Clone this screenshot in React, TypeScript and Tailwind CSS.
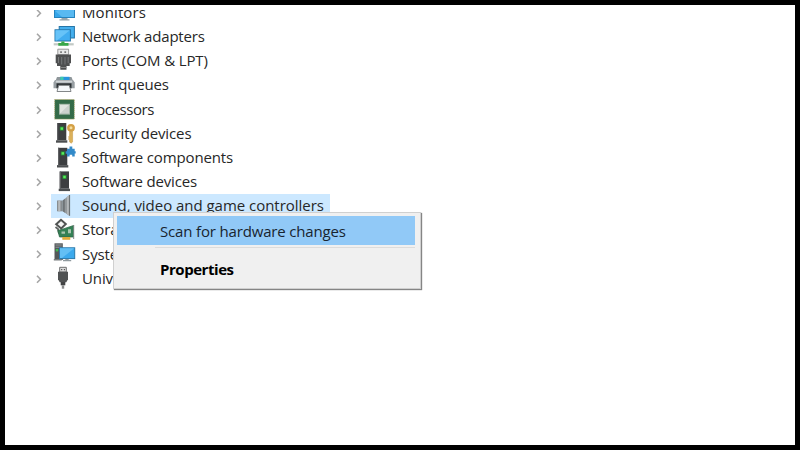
import React from 'react';

function Tower({ x, y = 0 }: { x: number; y?: number }) {
  return (
    <g transform={`translate(${x} ${y})`}>
      <path d="M1.2 0h9.3v17.3H1.2z" fill="#3c3e40" />
      <path d="M1.2 0h1.2v17.3H1.2z" fill="#606264" />
      <path d="M0.2 17.3h11.3v2.4H0.2z" fill="#4c4f51" />
      <rect x="4" y="3.6" width="4" height="4" fill="#258c35" />
      <rect x="4.8" y="4.4" width="2.4" height="2.4" fill="#5bea5b" />
    </g>
  );
}

function MonitorIcon() {
  return (
    <>
      <rect x="1.5" y="2" width="20" height="13.5" fill="#35a5e9" stroke="#2683bd" />
      <path d="M2 9l19-5v11H9z" fill="#58b9f1" />
      <path d="M8.5 16h6v1.3h2v1.3h-10v-1.3h2z" fill="#97a4aa" />
    </>
  );
}

function NetworkIcon() {
  return (
    <>
      <rect x="6.2" y="0.5" width="15.2" height="11.5" fill="#45afed" stroke="#2676a8" />
      <rect x="2" y="3.8" width="15.4" height="11.2" fill="#42adf0" stroke="#2676a8" />
      <path d="M2.5 4.3h14.4L4 14.5H2.5z" fill="#67c3f8" />
      <path d="M0.7 17.2h20v2.2h-20z" fill="#c2c9c5" />
      <path d="M8.3 15.5h3.2v1.5h4v2.8H5.3V17h3z" fill="#38a748" />
    </>
  );
}

function PortIcon() {
  return (
    <>
      <path d="M4.8 -0.8h10.8v5.5h-10.8z" fill="#e8e8e8" stroke="#919191" strokeWidth="0.9" />
      <path d="M7.2 1.3h1.7v1.6H7.2zM11.4 1.3h1.7v1.6h-1.7z" fill="#777" />
      <path d="M2.7 4.5h15.3v8.7h-1.3v2.8h-3.2v3.7H7.3V16H4v-2.8H2.7z" fill="#4e4f50" />
      <path d="M5.5 7v6M8.7 7v7.5M12 7v7.5M15.2 7v6" stroke="#77797a" strokeWidth="1" />
      <path d="M7.3 17.5h6.2" stroke="#858585" />
    </>
  );
}

function PrinterIcon() {
  return (
    <>
      <path d="M4 3h14.5l1.5 4H2.5z" fill="#8f979b" />
      <path d="M7.3 2.8H16.5V6.5H7.3z" fill="#2795de" />
      <path d="M7.3 2.8h3.2V6.5H7.3z" fill="#42c9ac" />
      <path d="M2 6h18l1.7 2.5v5.7H0.5V8.5z" fill="#989fa3" />
      <path d="M2.8 6.6h16.4v2H2.8z" fill="#cfd4d6" />
      <path d="M3.5 9.3h15v5h-15z" fill="#2b3033" />
      <path d="M5.7 11.3h10.6l1.7 6.2H4z" fill="#f5f8fa" stroke="#75797c" strokeWidth="0.9" />
    </>
  );
}

function ProcessorIcon() {
  return (
    <>
      <rect x="1.7" y="0.5" width="19.6" height="19.6" fill="#356d49" stroke="#b8ae74" strokeDasharray="1 1" />
      <rect x="2.5" y="1.3" width="18" height="18" fill="#346b49" />
      <rect x="6.5" y="5.3" width="10" height="9.8" fill="#cbd1cd" stroke="#a1b5a6" />
      <path d="M7 5.8h9L7 14.5z" fill="#e1e5e1" />
    </>
  );
}

function SecurityIcon() {
  return (
    <>
      <Tower x={2.8} />
      <circle cx="18" cy="4.8" r="2.7" fill="#f3dda0" stroke="#d4a046" strokeWidth="2.4" />
      <path d="M16.6 8.3h3V19l-1.4 1.2-1.6-1.2v-2l-1.3-1 1.3-1-1.3-1 1.3-1z" fill="#dcb15a" stroke="#c29442" strokeWidth="0.5" />
    </>
  );
}

function ComponentIcon() {
  return (
    <>
      <Tower x={3.8} y={0.8} />
      <path d="M14 1.8h2.5V-0.4h2.8v2.2h2.4v2.4h1v2.4h-1v2.8h-2.5V7.8h-2.6v1.6H14V6.8h-1.3V4.2H14z" fill="#338ac9" />
    </>
  );
}

function DeviceIcon() {
  return <Tower x={5.5} y={0.4} />;
}

function SpeakerIcon() {
  return (
    <>
      <path d="M4 5.5h5.8v10.8H4z" fill="#888d90" />
      <path d="M5.2 5.5h2.2v10.8H5.2z" fill="#b7babc" />
      <path d="M9.8 5.5L16.3 0v20.8L9.8 16.3z" fill="#94999c" />
      <path d="M9.8 5.5L11.8 3.8v13.9l-2-1.4z" fill="#6f7477" />
      <path d="M14 2v17.2l1.8 1.2V0.5z" fill="#b4b8ba" />
      <path d="M16.6 0v20.8" stroke="#64686a" />
    </>
  );
}

function StorageIcon() {
  return (
    <>
      <path d="M3.2 5.3L8 0.8l4.8 4.3-4.6 4.3z" fill="#f4f4f4" stroke="#505352" strokeWidth="2" />
      <path d="M2.5 8l2.5 2 1 4.5" fill="none" stroke="#606463" strokeWidth="1.8" />
      <path d="M4.8 11.5l6-1.8 9.7-3.2V18H6.5z" fill="#348155" stroke="#286342" strokeWidth="0.7" />
      <path d="M8.5 12.5h3.5v2.3H8.5zM15 10.2h3v4h-3z" fill="#a8c6af" />
      <path d="M9.3 18h8v2.8h-8z" fill="#dfac3b" />
      <path d="M20.7 6v14" stroke="#7e8884" />
    </>
  );
}

function SystemIcon() {
  return (
    <>
      <path d="M1.5 0.3h8.3v16.7H1.5z" fill="#54585a" />
      <path d="M2.5 2h6.3M2.5 4.2h6.3" stroke="#a9afb1" strokeWidth="0.8" />
      <path d="M0.8 16h8v1.5h-8z" fill="#777b7d" />
      <rect x="2.8" y="6" width="2.4" height="2.4" fill="#3fbd50" />
      <rect x="6.5" y="4.8" width="15.2" height="10.8" fill="#3ca9ec" stroke="#2978ab" />
      <path d="M7 5.3h14.2L9 15.1H7z" fill="#63bff4" />
      <path d="M12.3 16h3.4v1h2.5v1.3h-8.2V17h2.3z" fill="#909a9f" />
    </>
  );
}

function UsbIcon() {
  return (
    <>
      <path d="M6.7 -0.7h6.6v4.7H6.7z" fill="#ddd" stroke="#6d6e6f" />
      <path d="M8.1 1h1.2v1.3H8.1zM10.8 1H12v1.3h-1.2z" fill="#555" />
      <path d="M5 3.8h10v7.4l-1.7 3H6.7L5 11.2z" fill="#505253" />
      <path d="M7.7 14h4.6v3.3H7.7z" fill="#424344" />
      <path d="M8.8 17.3h2.4v3.4H8.8z" fill="#898a8b" />
    </>
  );
}

const devices = [
  { name: 'Monitors', icon: <MonitorIcon />, text: 'tracking-[0.1px]' },
  { name: 'Network adapters', icon: <NetworkIcon />, text: 'tracking-[-0.19px]' },
  { name: 'Ports (COM & LPT)', icon: <PortIcon />, text: 'tracking-[-0.12px]' },
  { name: 'Print queues', icon: <PrinterIcon />, text: 'tracking-[-0.18px]' },
  { name: 'Processors', icon: <ProcessorIcon />, text: 'tracking-[-0.45px]' },
  { name: 'Security devices', icon: <SecurityIcon />, text: 'tracking-[-0.12px]' },
  { name: 'Software components', icon: <ComponentIcon />, text: 'tracking-[-0.14px]' },
  { name: 'Software devices', icon: <DeviceIcon />, text: 'tracking-[-0.17px]' },
  { name: 'Sound, video and game controllers', icon: <SpeakerIcon />, text: 'tracking-[-0.03px]', selected: true },
  { name: 'Storage controllers', icon: <StorageIcon />, text: 'tracking-[-0.1px]' },
  { name: 'System devices', icon: <SystemIcon />, text: 'tracking-[-0.1px]' },
  { name: 'Universal Serial Bus controllers', icon: <UsbIcon />, text: 'tracking-[-0.1px]' },
];

export default function App() {
  return (
    <div className="relative h-[450px] w-[800px] overflow-hidden border-[5px] border-black bg-white pt-[5px] font-['Open_Sans','Noto_Sans',sans-serif] text-[15px] text-[#272727]">
      {/* Device tree */}
      <div className="h-full overflow-hidden">
        <div className="-mt-[9.2px] pl-[30px]">
          {devices.map((device) => (
            <div key={device.name} className="flex h-[24.16px] items-center">
              <svg className="mr-[8px] h-[10px] w-[8px] shrink-0" viewBox="0 0 8 10" fill="none">
                <path d="M2 1.8L5.4 5.3 2 8.8" stroke="#a6a6a6" strokeWidth="1.6" />
              </svg>
              <div className={`flex h-full items-center pl-[2px] ${device.selected ? 'w-[279px] bg-[#cce8ff]' : ''}`}>
                <svg className="mr-[7px] h-[22px] w-[22px] shrink-0 overflow-visible" viewBox="0 0 22 22">
                  {device.icon}
                </svg>
                <span className={`block pb-[1.8px] leading-[22px] whitespace-nowrap ${device.text}`}>{device.name}</span>
              </div>
            </div>
          ))}
        </div>
      </div>

      {/* Context menu */}
      <div className="absolute top-[207px] left-[108px] h-[77px] w-[308px] border border-[#d0d0d0] bg-[#f0f0f0] p-[3px] shadow-[1px_1px_1px_#858585]">
        <div className="flex h-[29px] w-[298px] items-center bg-[#91c9f7] pt-[2px] pl-[43px] text-[#18242f]">
          <span className="tracking-[-0.16px] whitespace-nowrap">Scan for hardware changes</span>
        </div>
        <div className="mt-[2px] ml-[38px] h-px w-[260px] bg-[#dcdcdc]" />
        <div className="flex h-[42px] items-center pt-px pl-[43px] font-bold text-black">
          <span className="tracking-[-0.45px] whitespace-nowrap">Properties</span>
        </div>
      </div>
    </div>
  );
}
